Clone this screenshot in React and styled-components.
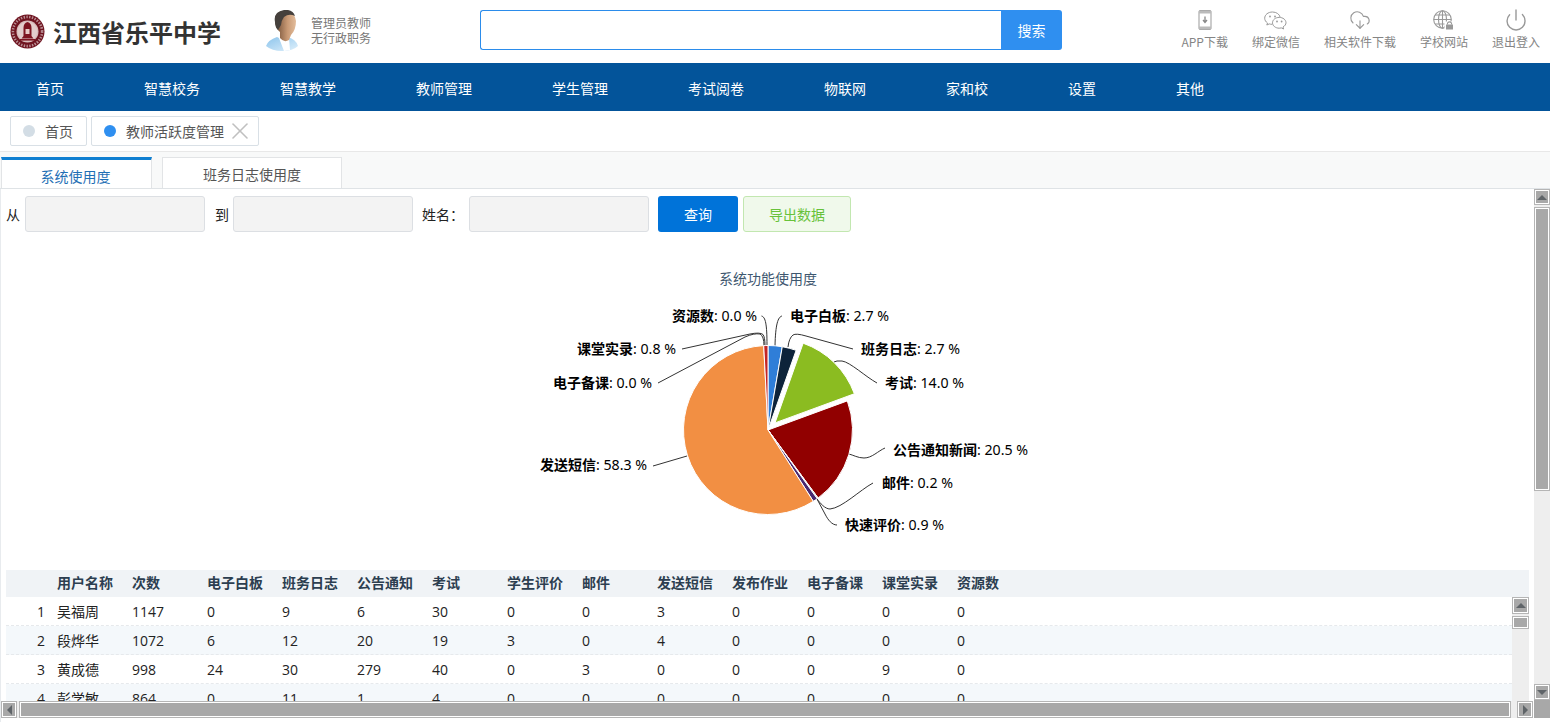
import React from "react";
import styled, { createGlobalStyle } from "styled-components";
import { Power, CloudDownload, X } from "lucide-react";

const Global = createGlobalStyle`
  html, body { margin: 0; padding: 0; height: 100%; overflow: hidden; background: #fff; }
  body { font-family: "Noto Sans CJK SC", "Noto Sans", sans-serif; font-size: 14px; color: #333; }
  * { box-sizing: border-box; }
`;

const Page = styled.div`
  width: 1550px; height: 722px; display: flex; flex-direction: column; overflow: hidden;
`;
const Header = styled.header`
  height: 63px; flex: none; display: flex; align-items: center; position: relative;
`;
const Brand = styled.div`
  width: 265px; flex: none; display: flex; align-items: center; padding-left: 10px; gap: 8px;
`;
const SchoolName = styled.div`
  font-size: 24px; font-weight: 700; color: #333; white-space: nowrap; line-height: 30px;
`;
const User = styled.div`
  width: 215px; flex: none; display: flex; align-items: center; gap: 12px; padding-bottom: 2px;
`;
const UserText = styled.div`
  font-size: 12px; line-height: 15px; color: #777; margin-bottom: 2px;
`;
const Search = styled.div`
  width: 582px; height: 40px; flex: none; display: flex; margin-top: -3px;
`;
const SearchInput = styled.div`
  flex: 1; border: 1px solid #2b8ceb; border-right: none; border-radius: 3px 0 0 3px; background: #fff;
`;
const SearchButton = styled.button`
  width: 61px; border: none; background: #2f8ff0; color: #fff; font: inherit; font-size: 14px; border-radius: 0 3px 3px 0; padding: 0;
`;
const Tools = styled.div`
  margin-left: auto; display: flex; gap: 24px; padding: 0 10px 5px 0;
`;
const Tool = styled.div`
  display: flex; flex-direction: column; align-items: center; color: #858585; font-size: 12px; line-height: 16px; white-space: nowrap;
`;
const ToolIcon = styled.div`
  height: 24px; display: flex; align-items: center; justify-content: center; color: #999; margin-bottom: 2px;
`;
const Nav = styled.nav`
  height: 48px; flex: none; background: #03549a; display: flex; padding-left: 36px; gap: 80px;
`;
const NavItem = styled.div`
  flex: none; color: #fff; font-size: 14px; line-height: 50px; white-space: nowrap;
`;
const TabBar = styled.div`
  height: 41px; flex: none; display: flex; gap: 4px; padding: 5px 0 0 10px; border-bottom: 1px solid #e8e8e8;
`;
const PageTab = styled.div`
  height: 30px; display: flex; align-items: center; padding: 0 13px 0 12px; gap: 10px; border: 1px solid #d9e0e6; border-radius: 2px; color: #555; font-size: 14px; white-space: nowrap;
`;
const Dot = styled.span`
  width: 12px; height: 12px; border-radius: 50%; background: ${p => p.$on ? "#2f8ff0" : "#d3dde5"};
`;
const CloseIcon = styled(X)`
  color: #c0c0c0; margin: 0 -9px 0 -8px;
`;
const SubTabs = styled.div`
  height: 37px; flex: none; display: flex; gap: 10px; background: #f8f9f9; padding: 0 0 0 1px; border-bottom: 1px solid #dfe3e6; align-items: flex-end;
`;
const SubTab = styled.div`
  width: ${p => p.$w}px; height: 31px; background: #fff; text-align: center; font-size: 14px; line-height: 32px;
  border: 1px solid #e2e4e6; border-bottom: none;
  color: ${p => p.$on ? "#1f6fb5" : "#555"};
  ${p => p.$on && "border-top: 3px solid #0f7fd1; padding-right: 2px;"}
`;
const Body = styled.div`
  flex: 1; min-height: 0; display: flex; border-left: 1px solid #e8ebee;
`;
const Main = styled.div`
  flex: 1; min-width: 0; display: flex; flex-direction: column;
`;
const Work = styled.div`
  flex: 1; min-height: 0; overflow: hidden; display: flex; flex-direction: column;
  padding: 7px 5px 0 5px;
`;
const Filters = styled.div`
  height: 36px; flex: none; display: flex; align-items: center; color: #222; font-size: 14px;
`;
const Label = styled.span`
  width: ${p => p.$w}px; padding-left: ${p => p.$p || 0}px; flex: none; white-space: nowrap;
`;
const Field = styled.div`
  width: 180px; height: 36px; flex: none; background: #f3f3f3; border: 1px solid #dcdfe3; border-radius: 3px;
`;
const QueryBtn = styled.button`
  width: 80px; height: 36px; margin-left: 9px; border: none; border-radius: 3px; background: #0073d9; color: #fff; font: inherit; padding: 0;
`;
const ExportBtn = styled.button`
  width: 108px; height: 36px; margin-left: 5px; border: 1px solid #c2e7b0; border-radius: 3px; background: #f0f9eb; color: #67c23a; font: inherit; padding: 0;
`;
const Chart = styled.div`
  height: 338px; flex: none;
`;
const TableWrap = styled.div`
  flex: 1; min-height: 0; display: flex; flex-direction: column; overflow: hidden;
`;
const Row = styled.div`
  display: flex; height: ${p => p.$h}px; flex: none; align-items: center;
  background: ${p => p.$bg};
  ${p => p.$dash && "border-bottom: 1px dashed #e6e9ec;"}
  ${p => p.$head && "padding-bottom: 3px;"}
`;
const Num = styled.div`
  width: 39px; flex: none; text-align: right; font-family: "Open Sans", "Noto Sans CJK SC", sans-serif; font-size: 14px; color: #222;
`;
const Cell = styled.div`
  width: 75px; flex: none; white-space: nowrap; font-family: "Open Sans", "Noto Sans CJK SC", sans-serif; font-size: 14px; color: #222;
  ${p => p.$first && "margin-left: 12px;"}
`;
const HeadCell = styled(Cell)`
  font-weight: 700; color: #2c3e50;
`;
const TableBody = styled.div`
  flex: 1; min-height: 0; display: flex; overflow: hidden;
`;
const Rows = styled.div`
  flex: 1; min-width: 0; overflow: hidden;
`;
const VBar = styled.div`
  width: ${p => p.$w}px; flex: none; background: #eeeeee; display: flex; flex-direction: column;
`;
const ScrollBtn = styled.div`
  width: 100%; height: ${p => p.$s || 16}px; flex: none; background: #a8a8a8; border: 2px solid #fff; outline: 1px solid #b5b5b5; outline-offset: -1px;
  display: flex; align-items: center; justify-content: center;
`;
const Thumb = styled.div`
  width: 100%; height: ${p => p.$h}px; flex: none; margin-top: ${p => p.$m || 2}px; background: #a8a8a8; border: 2px solid #fff; outline: 1px solid #b5b5b5; outline-offset: -1px;
`;
const Spacer = styled.div`
  flex: 1;
`;
const Corner = styled.div`
  height: 18px; flex: none; background: #a8a8a8;
`;
const HBar = styled.div`
  height: 17px; flex: none; background: #eeeeee; display: flex; align-items: stretch; margin-right: 1px;
`;
const HBtn = styled(ScrollBtn)`
  width: 16px; height: 17px;
`;
const HThumb = styled.div`
  flex: 1; margin-left: 2px; background: #a8a8a8; border: 2px solid #fff; outline: 1px solid #b5b5b5; outline-offset: -1px;
`;
const HGap = styled.div`
  width: 6px; flex: none;
`;
const Foot = styled.div`
  height: 4px; flex: none; background: #fff;
`;

const Tri = ({ dir }) => {
  const pts = { up: "0,6 5,1 10,6", down: "0,1 5,6 10,1", left: "6,0 1,5 6,10", right: "1,0 6,5 1,10" }[dir];
  const vert = dir === "up" || dir === "down";
  return (
    <svg width={vert ? 10 : 7} height={vert ? 7 : 10} viewBox={vert ? "0 0 10 7" : "0 0 7 10"}>
      <polygon points={pts} fill="#5f6468" />
    </svg>
  );
};

const Logo = () => (
  <svg width="35" height="35" viewBox="0 0 35 35">
    <circle cx="17.5" cy="17.5" r="17" fill="#6f1420" />
    <circle cx="17.5" cy="17.5" r="14.6" fill="none" stroke="#b98f94" strokeWidth="2.6" strokeDasharray="1.4 1.4" />
    <circle cx="17.5" cy="17.5" r="11" fill="#d9bcbc" />
    <circle cx="17.5" cy="17.5" r="9.8" fill="#e3cdcc" />
    <path d="M13.5 22 V14 Q13.5 9 17.5 8 Q21.5 9 21.5 14 V22 L23.5 24.5 H11.5 Z" fill="#7d1420" />
    <rect x="15.5" y="15" width="4" height="5" fill="#e8c9c6" />
    <rect x="10" y="25" width="15" height="1.6" fill="#7d1420" />
  </svg>
);

const Avatar = () => (
  <svg width="34" height="41" viewBox="0 0 34 41">
    <defs>
      <linearGradient id="skin" x1="0" x2="1" y1="0" y2="0">
        <stop offset="0" stopColor="#6d4a32" />
        <stop offset="0.6" stopColor="#c99a75" />
        <stop offset="1" stopColor="#e3bd9c" />
      </linearGradient>
      <linearGradient id="shirt" x1="0" x2="1" y1="0" y2="1">
        <stop offset="0" stopColor="#8cc4ec" />
        <stop offset="1" stopColor="#dff0fb" />
      </linearGradient>
    </defs>
    <path d="M1 36 Q3 30 12 27 L16 29 L22 27 Q31 29 33 36 Q28 41 17 41 Q7 41 1 36 Z" fill="url(#shirt)" />
    <path d="M14 28 L19 41 L25 40 L24 28 Z" fill="#fff" />
    <path d="M10 10 Q10 1 20 1 Q30 2 31 11 Q31 20 26 25 L24 30 Q19 33 15 28 L15 22 Q10 18 10 10 Z" fill="url(#skin)" />
    <path d="M10 12 Q8 2 19 0 Q28 -1 30 6 Q24 3 19 7 Q16 11 16 15 L13 20 Q10 17 10 12 Z" fill="#45403c" />
  </svg>
);

const Phone = () => (
  <svg width="14" height="20" viewBox="0 0 14 20">
    <rect x="1" y="0.5" width="12" height="19" rx="1" fill="none" stroke="#999" />
    <rect x="1" y="0.5" width="12" height="3" fill="#bbb" />
    <rect x="1" y="16.5" width="12" height="3" fill="#bbb" />
    <path d="M7 6.5 V12 M5 10 L7 12.5 L9 10" fill="none" stroke="#888" strokeWidth="1.3" />
  </svg>
);
const Wechat = () => (
  <svg width="23" height="19" viewBox="0 0 23 19" fill="none" stroke="#999">
    <path d="M8.5 1 C4 1 .7 3.8 .7 7.2 C.7 9.2 1.8 10.8 3.5 12 L2.8 14 L5.3 12.9 C6.2 13.2 7 13.3 8 13.3" fill="#fff" />
    <path d="M8.5 1 C12.5 1 15.6 3.3 16.2 6.3" />
    <circle cx="6" cy="5.5" r="0.9" fill="#999" stroke="none" />
    <circle cx="11" cy="5.5" r="0.9" fill="#999" stroke="none" />
    <path d="M15.2 6.4 C11.5 6.4 8.5 8.8 8.5 11.8 C8.5 14.8 11.5 17.2 15.2 17.2 C16 17.2 16.7 17.1 17.4 16.9 L19.6 18 L19 16 C20.7 15 22 13.5 22 11.8 C22 8.8 19 6.4 15.2 6.4 Z" fill="#fff" />
    <circle cx="13" cy="10.5" r="0.9" fill="#999" stroke="none" />
    <circle cx="17.6" cy="10.5" r="0.9" fill="#999" stroke="none" />
  </svg>
);
const Globe = () => (
  <svg width="21" height="20" viewBox="0 0 21 20" fill="none" stroke="#999" strokeWidth="1.1">
    <circle cx="9.5" cy="9.5" r="8.8" />
    <ellipse cx="9.5" cy="9.5" rx="4" ry="8.8" />
    <path d="M9.5 .7 V18.3 M.7 9.5 H18.3 M2 5 H17 M2 14 H17" />
    <rect x="11.5" y="11.5" width="9" height="8" fill="#fff" stroke="none" />
    <rect x="13" y="14.5" width="7" height="5" fill="#999" stroke="none" />
    <path d="M14.5 14.5 V13 Q16.5 10.8 18.5 13 V14.5" />
  </svg>
);

const slices = [
  { c: "#2f7ed8", a: 0, b: 9.72 },
  { c: "#0d233a", a: 9.72, b: 19.44 },
  { c: "#8bbc21", a: 19.44, b: 69.84, ex: 10 },
  { c: "#910000", a: 69.84, b: 143.64 },
  { c: "#c0c0c0", a: 143.64, b: 144.36 },
  { c: "#492970", a: 144.36, b: 147.6 },
  { c: "#f28f43", a: 147.6, b: 357.1 },
  { c: "#c42525", a: 357.1, b: 360 },
];
const pol = (cx, cy, r, d) => {
  const t = (d * Math.PI) / 180;
  return [cx + r * Math.sin(t), cy - r * Math.cos(t)];
};
const slicePath = ({ a, b, ex = 0 }) => {
  const [cx, cy] = pol(768, 430, ex, (a + b) / 2);
  const [x1, y1] = pol(cx, cy, 84.5, a);
  const [x2, y2] = pol(cx, cy, 84.5, b);
  return `M${cx} ${cy}L${x1} ${y1}A84.5 84.5 0 ${b - a > 180 ? 1 : 0} 1 ${x2} ${y2}Z`;
};
const links = [
  "M761.5 316 C765.5 317 767 324 767 345.5",
  "M782 316 C778 317 775.5 324 775 346",
  "M682 349 L750 334 Q760 332 763 334.5 Q765 337 765 346",
  "M658 383 L745 337 Q754 333 760 334 Q764 336 764 346",
  "M853 349 L806 336 Q796 333 793 335 Q789 338 788 347",
  "M877 383 C866 377 850 362 842 361 Q836 360.5 834 362",
  "M885 448 C878 451 872 458 864 458 C858 458 853 455 849 454",
  "M873 483 C860 490 842 508 830 509 C825 509 820 503 817 499",
  "M837 525 C832 525 828 520 825 514 L817 499",
  "M653 466 L687 456",
];
const labels = [
  ["资源数", "0.0 %", 672, 321],
  ["课堂实录", "0.8 %", 577, 354],
  ["电子备课", "0.0 %", 553, 388],
  ["发送短信", "58.3 %", 540, 470],
  ["电子白板", "2.7 %", 790, 321],
  ["班务日志", "2.7 %", 861, 354],
  ["考试", "14.0 %", 885, 388],
  ["公告通知新闻", "20.5 %", 893, 455],
  ["邮件", "0.2 %", 882, 488],
  ["快速评价", "0.9 %", 845, 530],
];

const PieChart = () => (
  <svg width="1523" height="338" viewBox="6 232 1523 338" style={{ display: "block" }}>
    <text x="768" y="284" textAnchor="middle" fontSize="14" fill="#3e576f">系统功能使用度</text>
    {links.map(d => <path key={d} d={d} fill="none" stroke="#333" strokeWidth="1" />)}
    {slices.map(s => <path key={s.c} d={slicePath(s)} fill={s.c} stroke="#fff" strokeWidth="1" strokeLinejoin="round" />)}
    {labels.map(([n, v, x, y]) => (
      <text key={n} x={x} y={y} fontSize="14" fill="#000">
        <tspan fontWeight="700">{n}</tspan><tspan fontFamily="'Noto Sans', sans-serif" fontSize="14.2">: {v}</tspan>
      </text>
    ))}
  </svg>
);

const heads = ["用户名称", "次数", "电子白板", "班务日志", "公告通知", "考试", "学生评价", "邮件", "发送短信", "发布作业", "电子备课", "课堂实录", "资源数"];
const data = [
  ["吴福周", 1147, 0, 9, 6, 30, 0, 0, 3, 0, 0, 0, 0],
  ["段烨华", 1072, 6, 12, 20, 19, 3, 0, 4, 0, 0, 0, 0],
  ["黄成德", 998, 24, 30, 279, 40, 0, 3, 0, 0, 0, 9, 0],
  ["彭学敏", 864, 0, 11, 1, 4, 0, 0, 0, 0, 0, 0, 0],
];
const navs = ["首页", "智慧校务", "智慧教学", "教师管理", "学生管理", "考试阅卷", "物联网", "家和校", "设置", "其他"];

export default function App() {
  return (
    <Page>
      <Global />
      <Header>
        <Brand><Logo /><SchoolName>江西省乐平中学</SchoolName></Brand>
        <User>
          <Avatar />
          <UserText>管理员教师<br />无行政职务</UserText>
        </User>
        <Search><SearchInput /><SearchButton>搜索</SearchButton></Search>
        <Tools>
          <Tool><ToolIcon><Phone /></ToolIcon>APP下载</Tool>
          <Tool><ToolIcon><Wechat /></ToolIcon>绑定微信</Tool>
          <Tool><ToolIcon><CloudDownload size={22} strokeWidth={1.2} /></ToolIcon>相关软件下载</Tool>
          <Tool><ToolIcon><Globe /></ToolIcon>学校网站</Tool>
          <Tool><ToolIcon><Power size={24} strokeWidth={1.4} /></ToolIcon>退出登入</Tool>
        </Tools>
      </Header>
      <Nav>{navs.map(n => <NavItem key={n}>{n}</NavItem>)}</Nav>
      <TabBar>
        <PageTab><Dot />首页</PageTab>
        <PageTab><Dot $on />教师活跃度管理<CloseIcon size={28} strokeWidth={1.4} /></PageTab>
      </TabBar>
      <SubTabs>
        <SubTab $w={151} $on>系统使用度</SubTab>
        <SubTab $w={180}>班务日志使用度</SubTab>
      </SubTabs>
      <Body>
        <Main>
          <Work>
            <Filters>
              <Label $w={19}>从</Label><Field />
              <Label $w={28} $p={10}>到</Label><Field />
              <Label $w={56} $p={9}>姓名：</Label><Field />
              <QueryBtn>查询</QueryBtn>
              <ExportBtn>导出数据</ExportBtn>
            </Filters>
            <Chart><PieChart /></Chart>
            <TableWrap>
              <Row $h={27} $bg="#f0f3f6" $head>
                <Num />
                {heads.map((h, i) => <HeadCell key={h} $first={i === 0}>{h}</HeadCell>)}
              </Row>
              <TableBody>
                <Rows>
                  {data.map((r, i) => (
                    <Row key={i} $h={29} $dash $bg={i % 2 ? "#f4f8fb" : "#fff"}>
                      <Num>{i + 1}</Num>
                      {r.map((c, j) => <Cell key={j} $first={j === 0}>{c}</Cell>)}
                    </Row>
                  ))}
                </Rows>
                <VBar $w={17}>
                  <ScrollBtn $s={17}><Tri dir="up" /></ScrollBtn>
                  <Thumb $h={13} $m={0} />
                </VBar>
              </TableBody>
            </TableWrap>
          </Work>
          <HBar>
            <HBtn><Tri dir="left" /></HBtn>
            <HThumb />
            <HGap />
            <HBtn><Tri dir="right" /></HBtn>
          </HBar>
          <Foot />
        </Main>
        <VBar $w={16}>
          <ScrollBtn><Tri dir="up" /></ScrollBtn>
          <Thumb $h={284} />
          <Spacer />
          <ScrollBtn><Tri dir="down" /></ScrollBtn>
          <Corner />
          <Foot />
        </VBar>
      </Body>
    </Page>
  );
}
